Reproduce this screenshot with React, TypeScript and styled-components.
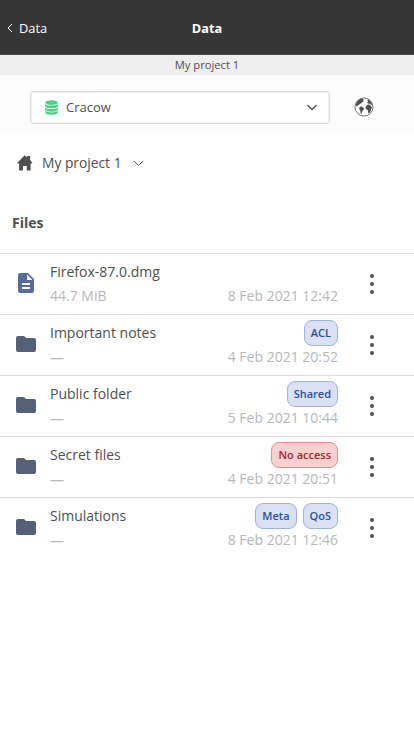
import React from "react";
import styled, { createGlobalStyle } from "styled-components";

const GlobalStyle = createGlobalStyle`
  * { box-sizing: border-box; }
  body {
    margin: 0;
    background: #fff;
    color: #4f4f4f;
    font: 14px/20px "Open Sans", sans-serif;
  }
`;

const Page = styled.div`
  min-height: 736px;
  overflow: hidden;
`;

const Header = styled.header`
  display: grid;
  grid-template-columns: 1fr auto 1fr;
  align-items: center;
  height: 55px;
  padding: 1px 7px 0;
  background: #363636;
  border-bottom: 1px solid #484848;
  color: #fff;
  font-size: 12.8px;
`;

const Back = styled.a`
  display: flex;
  align-items: center;
  gap: 6px;
`;

const Title = styled.h1`
  margin: 0;
  font-size: inherit;
  font-weight: 700;
`;

const Subtitle = styled.div`
  height: 20px;
  background: #eee;
  font-size: 11.2px;
  line-height: 20px;
  text-align: center;
`;

const Toolbar = styled.div`
  display: flex;
  align-items: center;
  height: 56px;
  padding: 8px 40px 0 30px;
  justify-content: space-between;
  background: #fcfcfc;
`;

const Select = styled.div`
  display: flex;
  align-items: center;
  width: 300px;
  height: 33px;
  padding: 0 12px 0 14px;
  background: #fff;
  border: 1px solid #dadada;
  border-radius: 3px;
  box-shadow: inset 0 0 0 1px #f2f2f2;
  font-size: 13px;
`;

const SelectLabel = styled.span`
  flex: 1;
  padding-left: 8px;
`;

const Breadcrumb = styled.nav`
  display: flex;
  align-items: center;
  height: 64px;
  padding-left: 16px;
`;

const Crumb = styled.span`
  padding: 0 11px 0 9px;
  font-size: 13.8px;
`;

const SectionTitle = styled.h2`
  margin: 0;
  height: 58px;
  padding: 18px 12px 0;
  font-size: 14px;
  line-height: 20px;
`;

const Row = styled.div`
  display: grid;
  grid-template-columns: 36px 1fr auto 68px;
  height: 61px;
  padding: 0 8px 0 14px;
  border-top: 1px solid #dcdcdc;
`;

const IconCell = styled.div`
  display: flex;
  align-items: center;
  padding-bottom: 2px;
`;

const Stack = styled.div<{ $end?: boolean }>`
  display: flex;
  flex-direction: column;
  align-items: ${(p) => (p.$end ? "flex-end" : "flex-start")};
  padding-top: 5px;
`;

const Line = styled.div`
  display: flex;
  align-items: center;
  gap: 6px;
  height: 25px;
`;

const Muted = styled.div<{ $dash?: boolean }>`
  height: 24px;
  line-height: ${(p) => (p.$dash ? 25 : 23)}px;
  color: #b8b8b8;
`;

const Tag = styled.span<{ $danger?: boolean }>`
  height: 26px;
  padding: 0 6px;
  border: 1px solid ${(p) => (p.$danger ? "#ee8e8e" : "#9db4e2")};
  border-radius: 8px;
  background: ${(p) => (p.$danger ? "#f8d0d0" : "#d9e1f2")};
  color: ${(p) => (p.$danger ? "#9b2c2c" : "#2d4f9b")};
  font-size: 11px;
  font-weight: 600;
  line-height: 24px;
`;

const Menu = styled.div`
  display: flex;
  flex-direction: column;
  align-items: center;
  justify-content: center;
  gap: 4px;
`;

const Dot = styled.i`
  width: 4px;
  height: 4px;
  border-radius: 50%;
  background: #4f4f4f;
`;

const Chevron = ({ w = 10 }: { w?: number }) => (
  <svg width={w} height="7" viewBox="0 0 10 7" fill="none" stroke="#4f4f4f" strokeWidth={w > 10 ? 1 : 1.3}>
    <path d="M.4 1 5 5.5 9.6 1" />
  </svg>
);

const Database = () => (
  <svg width="13" height="15" viewBox="0 0 13 15" fill="#46d387">
    <ellipse cx="6.5" cy="2.6" rx="6.3" ry="2.4" />
    <path d="M.2 4c2 2.1 10.6 2.1 12.6 0v2c0 3-12.6 3-12.6 0zM.2 7.4c2 2.1 10.6 2.1 12.6 0v2c0 3-12.6 3-12.6 0zM.2 10.8c2 2.1 10.6 2.1 12.6 0v1.8c0 3-12.6 3-12.6 0z" />
  </svg>
);

const Globe = () => (
  <svg width="20" height="20" viewBox="0 0 20 20" fill="#4f4f4f">
    <circle cx="10" cy="10" r="9" fill="#fff" stroke="#4f4f4f" strokeWidth=".8" />
    <path d="M1.6 7.5 4 3.5 7 1.8l2.6.2-.6 1.2 1.2.9-1.8.9-.9 1.3-1.5.4-1 1.3-1.3-.1.2 1-1.3.4z" />
    <path d="m5.8 9.8 1.8-.3 2.5 1.6-.7 1.8-1 1-.8 2.8-.9.2-.3-2.9-1.2-2z" />
    <path d="m12.4 8.8 1.6-1.2 2.1.2 1.2 1.9 1 .2-1.2 2-.4 2-1.5 2.4-1-.2-.4-3.2-1.8-.6-.6-2z" />
    <path d="m13.2 5.6.8-1.2-.8-1.4.9-.6 2.1 1.6 1.7 2.8.4 1.6-1.3-.9-1.6-.9-1.2.2z" />
  </svg>
);

const Home = () => (
  <svg width="17" height="17" viewBox="0 0 17 17" fill="#4f4f4f">
    <path d="M8.7.3 11.1 2.5V.9h3v4.2l2.4 2.8-.6.7h-1.3v6.3q0 .6-.6.6h-3.2V11H7v4.5H3.7q-.6 0-.6-.6V8.6H1.7l-.6-.7z" />
  </svg>
);

const FileIcon = () => (
  <svg width="24" height="24" viewBox="0 0 24 24">
    <path fill="#566c9d" d="M6 2h8l6 6v12a2 2 0 0 1-2 2H6a2 2 0 0 1-2-2V4a2 2 0 0 1 2-2z" />
    <path fill="#fff" d="M13 3.5V9h5.5zM8 12h8v2H8zm0 4h8v2H8z" />
  </svg>
);

const Folder = () => (
  <svg width="24" height="24" viewBox="0 0 24 24" fill="#545f78">
    <path d="M4 4h6l2 2h8a2 2 0 0 1 2 2v10a2 2 0 0 1-2 2H4a2 2 0 0 1-2-2V6a2 2 0 0 1 2-2z" />
  </svg>
);

type Entry = { name: string; size?: string; date: string; tags?: string[]; denied?: boolean };

const entries: Entry[] = [
  { name: "Firefox-87.0.dmg", size: "44.7 MiB", date: "8 Feb 2021 12:42" },
  { name: "Important notes", date: "4 Feb 2021 20:52", tags: ["ACL"] },
  { name: "Public folder", date: "5 Feb 2021 10:44", tags: ["Shared"] },
  { name: "Secret files", date: "4 Feb 2021 20:51", tags: ["No access"], denied: true },
  { name: "Simulations", date: "8 Feb 2021 12:46", tags: ["Meta", "QoS"] },
];

export default function App() {
  return (
    <Page>
      <GlobalStyle />
      <Header>
        <Back>
          <svg width="6" height="10" viewBox="0 0 6 10" fill="none" stroke="#fff">
            <path d="M5 1 1 5l4 4" />
          </svg>
          Data
        </Back>
        <Title>Data</Title>
      </Header>
      <Subtitle>My project 1</Subtitle>
      <Toolbar>
        <Select>
          <Database />
          <SelectLabel>Cracow</SelectLabel>
          <Chevron />
        </Select>
        <Globe />
      </Toolbar>
      <Breadcrumb>
        <Home />
        <Crumb>My project 1</Crumb>
        <Chevron w={11} />
      </Breadcrumb>
      <SectionTitle>Files</SectionTitle>
      {entries.map((e) => (
        <Row key={e.name}>
          <IconCell>{e.size ? <FileIcon /> : <Folder />}</IconCell>
          <Stack>
            <Line>{e.name}</Line>
            <Muted $dash={!e.size}>{e.size ?? "—"}</Muted>
          </Stack>
          <Stack $end>
            <Line>
              {e.tags?.map((t) => (
                <Tag key={t} $danger={e.denied}>{t}</Tag>
              ))}
            </Line>
            <Muted>{e.date}</Muted>
          </Stack>
          <Menu>
            <Dot />
            <Dot />
            <Dot />
          </Menu>
        </Row>
      ))}
    </Page>
  );
}
